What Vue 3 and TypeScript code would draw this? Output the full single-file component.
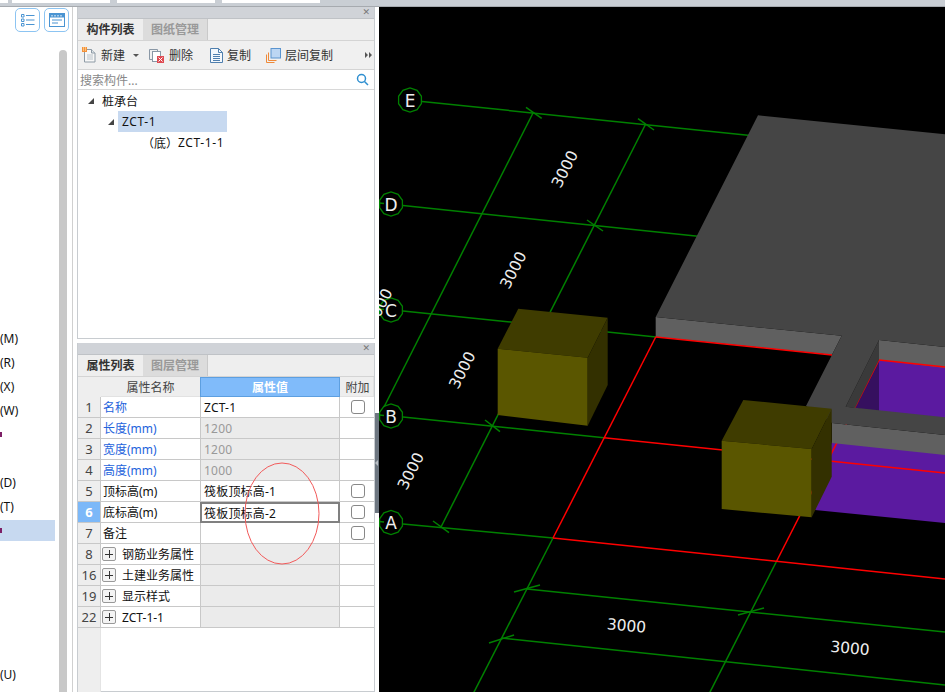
<script setup lang="ts">
interface SideRow {
  text?: string;
  mark?: boolean;
  active?: boolean;
}
interface PropRow {
  no: number;
  name: string;
  value?: string;
  blue?: boolean;
  locked?: boolean;
  check?: boolean;
  group?: boolean;
  current?: boolean;
}
interface Axis {
  label: string;
  x: number;
  y: number;
}
interface Seg {
  x1: number;
  y1: number;
  x2: number;
  y2: number;
}
interface Dim {
  x: number;
  y: number;
  angle: number;
}

const sideRows: SideRow[] = Array.from({ length: 27 }, () => ({}));
sideRows[12] = { text: "(M)" };
sideRows[13] = { text: "(R)" };
sideRows[14] = { text: "(X)" };
sideRows[15] = { text: "(W)" };
sideRows[16] = { mark: true };
sideRows[18] = { text: "(D)" };
sideRows[19] = { text: "(T)" };
sideRows[20] = { mark: true, active: true };
sideRows[26] = { text: "(U)" };

const tools = [
  { label: "新建", icon: "new" },
  { label: "删除", icon: "del" },
  { label: "复制", icon: "copy" },
  { label: "层间复制", icon: "floor" },
];

const propRows: PropRow[] = [
  { no: 1, name: "名称", value: "ZCT-1", blue: true, check: true },
  { no: 2, name: "长度(mm)", value: "1200", blue: true, locked: true },
  { no: 3, name: "宽度(mm)", value: "1200", blue: true, locked: true },
  { no: 4, name: "高度(mm)", value: "1000", blue: true, locked: true },
  { no: 5, name: "顶标高(m)", value: "筏板顶标高-1", check: true },
  { no: 6, name: "底标高(m)", value: "筏板顶标高-2", check: true, current: true },
  { no: 7, name: "备注", check: true },
  { no: 8, name: "钢筋业务属性", group: true },
  { no: 16, name: "土建业务属性", group: true },
  { no: 19, name: "显示样式", group: true },
  { no: 22, name: "ZCT-1-1", group: true },
];

const axes: Axis[] = [
  { label: "E", x: 410, y: 100 },
  { label: "D", x: 391, y: 204 },
  { label: "C", x: 391, y: 310 },
  { label: "B", x: 391, y: 416 },
  { label: "A", x: 391, y: 522.5 },
];

// ten sided bubble round each axis label
const bubble = (a: Axis) =>
  Array.from({ length: 10 }, (_, i) => {
    const t = (i * Math.PI) / 5 + Math.PI / 10;
    return `${(a.x + 12 * Math.cos(t)).toFixed(1)},${(a.y + 12 * Math.sin(t)).toFixed(1)}`;
  }).join(" ");

const greenLines: Seg[] = [
  { x1: 422, y1: 101.5, x2: 760, y2: 136.5 },
  { x1: 403, y1: 205.5, x2: 710, y2: 237.5 },
  { x1: 403, y1: 311, x2: 656, y2: 337 },
  { x1: 403, y1: 417, x2: 604, y2: 437.7 },
  { x1: 403, y1: 524, x2: 553, y2: 538 },
  // stubs inside the bubbles
  { x1: 379, y1: 203, x2: 384, y2: 203.5 },
  { x1: 379, y1: 309, x2: 384, y2: 309.5 },
  { x1: 379, y1: 415, x2: 384, y2: 415.5 },
  { x1: 379, y1: 521.5, x2: 384, y2: 522 },
  { x1: 533, y1: 113, x2: 384, y2: 407 },
  { x1: 645.7, y1: 124, x2: 441, y2: 527 },
  { x1: 553, y1: 538, x2: 472, y2: 696 },
  { x1: 776.7, y1: 561, x2: 708, y2: 696 },
  { x1: 527, y1: 589, x2: 945, y2: 632 },
  { x1: 501.7, y1: 638, x2: 945, y2: 685 },
  { x1: 526, y1: 107.3, x2: 541.7, y2: 118.3 },
  { x1: 638, y1: 118.7, x2: 654, y2: 130 },
  { x1: 587, y1: 220, x2: 603, y2: 231 },
  { x1: 485, y1: 420, x2: 500, y2: 431.7 },
  { x1: 433, y1: 521, x2: 449, y2: 532.7 },
  { x1: 514, y1: 592, x2: 540, y2: 585 },
  { x1: 489, y1: 643, x2: 514, y2: 635 },
  { x1: 738, y1: 615, x2: 764, y2: 608 },
];

const redLines: Seg[] = [
  { x1: 604, y1: 437.7, x2: 945, y2: 473 },
  { x1: 553, y1: 538, x2: 945, y2: 579 },
  { x1: 655.7, y1: 337, x2: 553, y2: 538 },
  { x1: 879, y1: 360, x2: 776.7, y2: 561 },
];

const dims: Dim[] = [
  { x: 564.5, y: 169, angle: -63 },
  { x: 513, y: 270, angle: -63 },
  { x: 462, y: 370, angle: -63 },
  { x: 410.5, y: 471, angle: -63 },
  { x: 379, y: 307, angle: -63 },
  { x: 626.5, y: 625.5, angle: 5 },
  { x: 850, y: 648, angle: 5 },
];
</script>

<template>
  <div class="app">
    <div class="topbar">
      <span class="top-tab t0"></span>
      <span class="top-tab t1"></span>
      <span class="top-tab t2"></span>
      <span class="top-tab t3"></span>
    </div>

    <div class="main">
      <aside class="side">
        <div class="side-tools">
          <button class="side-btn">
            <svg width="14" height="14" viewBox="0 0 14 14" fill="none" stroke="#4a94d2">
              <path d="M.5 1.500h2.500v2.500h-2.500zM.5 6h2.500v2.500h-2.500zM.5 10.500h2.500v2.500h-2.500z" stroke-width="1" />
              <path d="M5 2.500h8.500M5 7h8.500M5 11.500h8.500" stroke-width="1.200" />
            </svg>
          </button>
          <button class="side-btn">
            <svg width="16" height="14" viewBox="0 0 16 14">
              <rect x=".5" y=".5" width="15" height="13" fill="#fff" stroke="#4a94d2" />
              <rect x="1" y="1" width="14" height="3.500" fill="#4a94d2" />
              <path d="M3 2v1.500M6 2v1.500M9 2v1.500M12 2v1.500" stroke="#fff" />
              <path d="M3 7h10M3 10h6" stroke="#4a94d2" stroke-width="1.200" />
            </svg>
          </button>
        </div>
        <div class="side-list">
          <div v-for="(row, i) in sideRows" :key="i" :class="['side-row', { active: row.active }]">
            <span v-if="row.text">{{ row.text }}</span>
            <i v-if="row.mark" class="side-mark"></i>
          </div>
        </div>
        <div class="side-scroll"></div>
      </aside>

      <section class="panels">
        <div class="panel top-panel">
          <div class="panel-head"><span class="close">✕</span></div>
          <div class="tabs">
            <span class="tab on">构件列表</span>
            <span class="tab">图纸管理</span>
          </div>
          <div class="toolbar">
            <template v-for="tool in tools" :key="tool.icon">
              <span :class="['tool', tool.icon]">
                <svg v-if="tool.icon === 'new'" width="15" height="16" viewBox="0 0 15 16">
                  <path d="M2.500 2.500h7l3.500 3.500v9h-10.500z" fill="#f7f7f7" stroke="#8d9aa5" />
                  <path d="M9.500 2.500v3.500h3.500" fill="#dfe5ea" stroke="#8d9aa5" />
                  <path d="M5 8h6M5 10h6M5 12h6" stroke="#b9c2c9" />
                  <rect x="0" y="0" width="5" height="5" fill="#f4913a" />
                  <path d="M1 1h1M3 3h1M3 1h1M1 3h1" stroke="#fff3c4" />
                </svg>
                <svg v-else-if="tool.icon === 'del'" width="16" height="15" viewBox="0 0 16 15">
                  <path d="M.5 1.500h8v2M.5 1.500v10h3" fill="none" stroke="#8a98a6" />
                  <rect x="3.500" y="3.500" width="8" height="10" fill="#fff" stroke="#8a98a6" />
                  <rect x="8" y="8" width="7" height="7" fill="#df4a52" />
                  <path d="M9.500 9.500l4 4M13.500 9.500l-4 4" stroke="#fff" />
                </svg>
                <svg v-else-if="tool.icon === 'copy'" width="13" height="15" viewBox="0 0 13 15">
                  <path d="M.5 .5h8l4 4v10h-12z" fill="#f4f8fc" stroke="#4f7fae" />
                  <path d="M8.500 .5v4h4" fill="none" stroke="#4f7fae" />
                  <path d="M3 6.500h7M3 8.500h7M3 10.500h7M3 12.500h7" stroke="#4f7fae" />
                </svg>
                <svg v-else width="15" height="15" viewBox="0 0 15 15">
                  <path d="M.5 6.500v8h8" fill="none" stroke="#ee8a3a" />
                  <path d="M2.500 4.500v8h8" fill="none" stroke="#ee8a3a" />
                  <rect x="5" y=".5" width="9.500" height="9.500" fill="#bcd6f3" stroke="#5a94cf" />
                </svg>
                <span>{{ tool.label }}</span>
                <i v-if="tool.icon === 'new'" class="caret"></i>
              </span>
            </template>
            <svg class="more" width="7" height="6" viewBox="0 0 7 6" fill="#555">
              <path d="M0 0l3 3l-3 3zM4 0l3 3l-3 3z" />
            </svg>
          </div>
          <div class="search">
            <span>搜索构件...</span>
            <svg width="13" height="13" viewBox="0 0 13 13" fill="none" stroke="#2f8fd0" stroke-width="1.500">
              <circle cx="5.500" cy="5.500" r="4" />
              <path d="M8.500 8.500l3.500 3.500" />
            </svg>
          </div>
          <div class="tree">
            <div class="node lvl0"><i class="tri"></i><span>桩承台</span></div>
            <div class="node lvl1"><i class="tri"></i><span class="picked">ZCT-1</span></div>
            <div class="node lvl2"><span>（底）</span><span class="latin">ZCT-1-1</span></div>
          </div>
        </div>

        <div class="panel bottom-panel">
          <div class="panel-head"><span class="close">✕</span></div>
          <div class="tabs">
            <span class="tab on">属性列表</span>
            <span class="tab">图层管理</span>
          </div>
          <div class="grid">
            <div class="cell no head-no"></div>
            <div class="cell head">属性名称</div>
            <div class="cell head value-head">属性值</div>
            <div class="cell head extra-head">附加</div>
            <template v-for="row in propRows" :key="row.no">
              <div :class="['cell', 'no', { current: row.current }]">{{ row.no }}</div>
              <div :class="['cell', 'name', { blue: row.blue }]">
                <i v-if="row.group" class="plus"></i>
                <span>{{ row.name }}</span>
              </div>
              <div :class="['cell', 'val', { locked: row.locked || row.group, editing: row.current }]">{{ row.value }}</div>
              <div class="cell extra"><i v-if="row.check" class="check"></i></div>
            </template>
            <div class="no-fill"></div>
          </div>
        </div>
        <!-- hand drawn mark on top of the property table -->
        <svg class="scribble" width="78" height="105" viewBox="0 0 78 105">
          <ellipse cx="39" cy="52.500" rx="37" ry="50.500" fill="none" stroke="#f25a5a" />
        </svg>
      </section>

      <div class="gutter"><div class="handle"><i></i></div></div>

      <svg class="scene" viewBox="379 7 566 685" width="566" height="685">
        <rect x="379" y="7" width="566" height="685" fill="#000" />
        <line
          v-for="(s, i) in greenLines"
          :key="'g' + i"
          :x1="s.x1"
          :y1="s.y1"
          :x2="s.x2"
          :y2="s.y2"
          stroke="#008000"
          stroke-width="1.500"
        />
        <polygon
          v-for="a in axes"
          :key="a.label"
          :points="bubble(a)"
          fill="none"
          stroke="#008000"
          stroke-width="1.300"
        />
        <text v-for="a in axes" :key="'t' + a.label" :x="a.x" :y="a.y + 6.500" class="axis-text">{{ a.label }}</text>
        <text
          v-for="(d, i) in dims"
          :key="'d' + i"
          :transform="`translate(${d.x} ${d.y}) rotate(${d.angle})`"
          y="5.500"
          class="dim-text"
        >3000</text>

        <!-- pit floors -->
        <polygon points="879,360 945,367 945,420 879,412" fill="#5b1aa0" />
        <polygon points="879,360 855,408 879,412" fill="#36105f" />
        <polygon points="832,441 945,453 945,523 815,510" fill="#5b1aa0" />
        <line v-for="(s, i) in redLines" :key="'r' + i" :x1="s.x1" :y1="s.y1" :x2="s.x2" :y2="s.y2" stroke="#f00" stroke-width="1.500" />

        <!-- slab -->
        <polygon points="655.700,317 841.700,335.700 832,354.700 655.700,337" fill="#606060" />
        <polygon points="879,340 945,347 945,368 879,360" fill="#606060" />
        <polygon points="879,340 879,360 855,408 845.700,406.700" fill="#3a3a3a" />
        <polygon points="832,423 945,435 945,455 832,443" fill="#606060" />
        <polygon
          points="758,115.300 945,134.300 945,347 879,340 845.700,406.700 945,417.300 945,435 832,423 806,406 841.700,335.700 655.700,317"
          fill="#454545"
        />
        <line x1="655.700" y1="337" x2="832" y2="355" stroke="#f00" stroke-width="1.500" />
        <line x1="879" y1="360" x2="945" y2="367" stroke="#f00" stroke-width="1.500" />

        <!-- pile caps -->
        <polygon points="518.300,308.700 607.700,317.700 587.700,357.700 497.700,348.700" fill="#3f3c00" />
        <polygon points="497.700,348.700 587.700,357.700 587.700,425.700 497.700,415" fill="#5a5600" />
        <polygon points="607.700,317.700 607.700,385 587.700,425.700 587.700,357.700" fill="#333000" />
        <polygon points="743.300,400 831.700,408.700 811.700,449 721.700,440.700" fill="#3f3c00" />
        <polygon points="721.700,440.700 811.700,449 811.700,517.300 721.700,509" fill="#5a5600" />
        <polygon points="831.700,408.700 831.700,476.700 811.700,517.300 811.700,449" fill="#333000" />
      </svg>
    </div>
  </div>
</template>

<style scoped>
.app {
  width: 945px;
  height: 692px;
  display: flex;
  flex-direction: column;
  overflow: hidden;
  background: #fff;
  font-family: "Noto Sans", "Noto Sans CJK SC", sans-serif;
  font-size: 12px;
  color: #111;
}

/* window strip */
.topbar {
  height: 6px;
  flex: none;
  display: flex;
  align-items: flex-start;
  background: #c9ced4;
  border-bottom: 1px solid #a6aaaf;
}
.top-tab {
  height: 3px;
  background: #fff;
  margin-right: 7px;
}
.t0 { width: 8px; margin-right: 4px; }
.t1 { width: 98px; }
.t2 { width: 98px; }
.t3 { width: 98px; }

.main {
  flex: 1;
  display: flex;
  min-height: 0;
}

/* left list */
.side {
  width: 72px;
  flex: none;
  position: relative;
  border-right: 1px solid #d0d0d0;
  margin-right: 4px;
  box-sizing: content-box;
}
.side-tools {
  height: 24px;
  padding-top: 1px;
  padding-left: 15px;
  display: flex;
  gap: 4px;
}
.side-btn {
  width: 25px;
  height: 24px;
  padding: 0;
  background: #fff;
  border: 1px solid #8cc4f2;
  border-radius: 5px;
  display: flex;
  align-items: center;
  justify-content: center;
}
.side-list {
  margin-top: 8px;
  display: grid;
  grid-auto-rows: 21px;
  row-gap: 3px;
  width: 55px;
}
.side-row {
  display: flex;
  align-items: center;
  line-height: 21px;
}
.side-row.active {
  background: #c7d9f0;
}
.side-mark {
  width: 2px;
  height: 5px;
  background: #7d1f66;
}
.side-scroll {
  position: absolute;
  left: 59px;
  top: 43px;
  bottom: 0;
  width: 8px;
  border-radius: 4px 4px 0 0;
  background: #c8c8c8;
}

/* panels */
.panels {
  width: 298px;
  flex: none;
  position: relative;
  display: flex;
  flex-direction: column;
  gap: 4px;
}
.panel {
  border: 1px solid #c8ccd0;
  border-top: 0;
  box-sizing: border-box;
  display: flex;
  flex-direction: column;
}
.top-panel {
  height: 332px;
  flex: none;
}
.bottom-panel {
  flex: 1;
  min-height: 0;
}
.panel-head {
  height: 11px;
  flex: none;
  background: #d0d3d8;
  border-bottom: 1px solid #bfc2c6;
  display: flex;
  justify-content: flex-end;
  align-items: center;
  padding-right: 4px;
}
.close {
  font-size: 9px;
  line-height: 11px;
  color: #777;
  font-family: "DejaVu Sans", sans-serif;
  font-weight: bold;
}
.tabs {
  height: 21px;
  flex: none;
  display: flex;
  background: #eee;
  border-bottom: 1px solid #d4d4d4;
}
.tab {
  width: 64px;
  text-align: center;
  line-height: 21px;
  font-weight: bold;
  color: #999;
  background: #dcdcdc;
  border-right: 1px solid #c9c9c9;
}
.tab.on {
  width: 65px;
  color: #333;
  background: #eee;
  border-right: 0;
}
.toolbar {
  height: 29px;
  flex: none;
  box-sizing: border-box;
  background: #f0f0f0;
  border-bottom: 1px solid #d4d4d4;
  display: flex;
  align-items: center;
  padding-left: 4px;
}
.tool {
  display: flex;
  align-items: center;
  gap: 4px;
  color: #333;
}
.tool.new { margin-right: 10px; }
.tool.del { margin-right: 17px; }
.tool.copy { margin-right: 15px; }
.caret {
  width: 0;
  height: 0;
  margin-left: 4px;
  border-left: 3px solid transparent;
  border-right: 3px solid transparent;
  border-top: 3px solid #555;
}
.more {
  margin-left: auto;
  margin-right: 2px;
}
.search {
  height: 19px;
  flex: none;
  display: flex;
  align-items: center;
  justify-content: space-between;
  padding: 0 5px 0 2px;
  color: #888;
  border-bottom: 1px solid #d8d8d8;
}
.tree {
  flex: 1;
  background: #fff;
}
.node {
  height: 21px;
  display: flex;
  align-items: center;
}
.lvl0 { padding-left: 10px; }
.lvl1 { padding-left: 30px; }
.lvl2 { padding-left: 64px; }
.tri {
  width: 0;
  height: 0;
  border-bottom: 6px solid #444;
  border-left: 6px solid transparent;
  margin-right: 8px;
}
.lvl1 .tri {
  margin-right: 4px;
}
.picked {
  display: block;
  width: 105px;
  padding-left: 4px;
  line-height: 21px;
  letter-spacing: 0.6px;
  background: #c7d9f0;
}
.latin {
  letter-spacing: 0.6px;
}

/* property table */
.grid {
  flex: 1;
  min-height: 0;
  display: grid;
  grid-template-columns: 23px 100px 139px 34px;
  grid-template-rows: 20px;
  grid-auto-rows: 21px;
  background: #fff;
  position: relative;
}
.cell {
  box-sizing: border-box;
  border-right: 1px solid #c8c8c8;
  border-bottom: 1px solid #c8c8c8;
  display: flex;
  align-items: center;
  white-space: nowrap;
  overflow: hidden;
}
.head {
  justify-content: center;
  background: #eee;
  color: #444;
  border-color: #e2e2e2;
}
.extra-head {
  padding-left: 2px;
}
.head-no {
  background: #f7f7f7;
  border-color: #eee;
}
.value-head {
  margin-left: -1px;
  background: #80bbfa;
  color: #fff;
  font-weight: bold;
  border: 1px solid #5d9fe0;
}
.no {
  background: #eee;
  justify-content: center;
  font-size: 13px;
  color: #444;
}
.no.current {
  background: #7cb8f8;
  color: #fff;
  font-weight: bold;
}
.no-fill {
  grid-column: 1;
  height: 200px;
  background: #eee;
  border-right: 1px solid #e4e4e4;
  box-sizing: border-box;
}
.name {
  padding-left: 2px;
}
.name.blue {
  color: #2463dc;
}
.plus {
  width: 14px;
  height: 14px;
  margin-left: -1px;
  margin-right: 6px;
  flex: none;
  box-sizing: border-box;
  border: 1px solid #999;
  border-radius: 2px;
  background: linear-gradient(#333, #333) center / 8px 1px no-repeat,
    linear-gradient(#333, #333) center / 1px 8px no-repeat, #f4f4f4;
}
.val {
  padding-left: 3px;
  letter-spacing: 0.2px;
}
.val.locked {
  background: #ebebeb;
  color: #999;
}
.val.editing {
  margin-left: -1px;
  border: 2px solid #808080;
  padding-left: 2px;
}
.extra {
  justify-content: center;
  padding-left: 2px;
  border-right: 0;
}
.check {
  width: 14px;
  height: 14px;
  box-sizing: border-box;
  border: 1px solid #888;
  border-radius: 3px;
  background: #fff;
}
.scribble {
  position: absolute;
  left: 166px;
  top: 453.500px;
  overflow: visible;
}

/* splitter between panels and drawing */
.gutter {
  width: 4px;
  flex: none;
  background: #fff;
}
.handle {
  width: 4px;
  height: 100px;
  margin-top: 406px;
  background: #6d7680;
  display: flex;
  align-items: center;
}
.handle i {
  width: 0;
  height: 0;
  border-top: 3px solid transparent;
  border-bottom: 3px solid transparent;
  border-right: 3px solid #b9bec4;
}

.scene {
  flex: none;
  display: block;
}
.axis-text {
  fill: #eee;
  font-family: "DejaVu Sans", sans-serif;
  font-size: 17px;
  text-anchor: middle;
}
.dim-text {
  fill: #eee;
  font-family: "DejaVu Sans", sans-serif;
  font-size: 15.500px;
  text-anchor: middle;
}
</style>

<style>
html,
body {
  margin: 0;
  overflow: hidden;
}
</style>
